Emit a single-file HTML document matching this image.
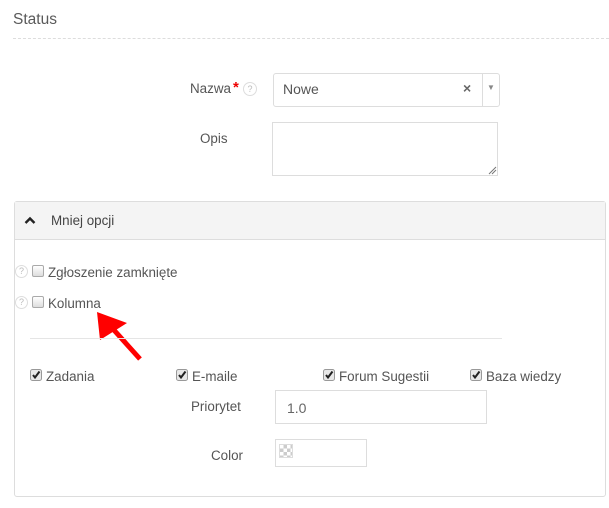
<!DOCTYPE html>
<html><head><meta charset="utf-8"><style>
*{box-sizing:border-box;margin:0;padding:0}
body{width:609px;height:508px;background:#fff;font-family:"Liberation Sans","DejaVu Sans",sans-serif;font-size:13.4px;color:#555;position:relative;overflow:hidden}
.a{position:absolute;white-space:nowrap}
.q{position:absolute;width:14px;height:14px;border:1px solid #ddd;border-radius:50%;font-size:9px;color:#bbb;text-align:center;line-height:12px;background:#fff}
.cb{position:absolute;width:12px;height:12px;border:1px solid #aaa;border-radius:2px;background:linear-gradient(#fff,#ddd)}
.in{position:absolute;border:1px solid #ddd;background:#fff}
</style></head><body>
<div class="a" style="left:13px;top:11px;font-size:15.5px;color:#5a5a5a">Status</div>
<div class="a" style="left:13px;top:38px;width:596px;border-top:1px dashed #ddd"></div>

<div class="a" style="left:190px;top:81px">Nazwa</div>
<div class="a" style="left:233px;top:79px;color:#e00;font-size:15px;font-weight:bold">*</div>
<div class="q" style="left:243px;top:82px">?</div>
<div class="in" style="left:273px;top:73px;width:227px;height:34px;border-radius:3px"></div>
<div class="a" style="left:283px;top:81px;font-size:14px;color:#555">Nowe</div>
<div class="a" style="left:463px;top:80px;font-size:14px;color:#666;font-weight:bold">×</div>
<div class="a" style="left:482px;top:74px;height:32px;border-left:1px solid #ddd"></div>
<div class="a" style="left:487px;top:83px;font-size:8px;color:#888">▼</div>

<div class="a" style="left:200px;top:131px">Opis</div>
<div class="in" style="left:272px;top:122px;width:226px;height:54px"></div>
<svg class="a" style="left:487px;top:165px" width="10" height="10"><path d="M2 9L9 2M5 9L9 5" stroke="#777" stroke-width="1"/></svg>

<div class="a" style="left:14px;top:201px;width:592px;height:296px;border:1px solid #ddd;border-radius:3px"></div>
<div class="a" style="left:15px;top:202px;width:590px;height:38px;background:#f4f4f4;border-bottom:1px solid #ddd"></div>
<svg class="a" style="left:24px;top:216px" width="12" height="9"><path d="M1.5 7L6 2.5L10.5 7" stroke="#222" stroke-width="2.4" fill="none"/></svg>
<div class="a" style="left:51px;top:213px;color:#444">Mniej opcji</div>

<div class="q" style="left:15px;top:265px;width:13px;height:13px;line-height:11px">?</div>
<div class="cb" style="left:32px;top:265px"></div>
<div class="a" style="left:48px;top:265px">Zgłoszenie zamknięte</div>
<div class="q" style="left:15px;top:296px;width:13px;height:13px;line-height:11px">?</div>
<div class="cb" style="left:32px;top:296px"></div>
<div class="a" style="left:48px;top:296px">Kolumna</div>

<svg class="a" style="left:0;top:0" width="609" height="508"><path d="M140 359L113 329" stroke="#f00" stroke-width="5"/><path d="M97 312L127 323L100 340Z" fill="#f00"/></svg>

<div class="a" style="left:30px;top:338px;width:472px;border-top:1px solid #e5e5e5"></div>

<svg width="0" height="0" style="position:absolute"><defs><g id="ck"><rect x="0.5" y="0.5" width="11" height="11" rx="2" fill="#e8e8e8" stroke="#999"/><path d="M3 6L5 8.5L9.5 2.5" stroke="#222" stroke-width="2" fill="none"/></g></defs></svg>
<svg class="a" style="left:30px;top:369px" width="12" height="12"><use href="#ck"/></svg>
<div class="a" style="left:46px;top:369px">Zadania</div>
<svg class="a" style="left:176px;top:369px" width="12" height="12"><use href="#ck"/></svg>
<div class="a" style="left:192px;top:369px">E-maile</div>
<svg class="a" style="left:323px;top:369px" width="12" height="12"><use href="#ck"/></svg>
<div class="a" style="left:339px;top:369px">Forum Sugestii</div>
<svg class="a" style="left:470px;top:369px" width="12" height="12"><use href="#ck"/></svg>
<div class="a" style="left:486px;top:369px">Baza wiedzy</div>

<div class="a" style="left:191px;top:399px">Priorytet</div>
<div class="in" style="left:275px;top:390px;width:212px;height:34px"></div>
<div class="a" style="left:287px;top:400px;font-size:14px;color:#666">1.0</div>

<div class="a" style="left:211px;top:448px">Color</div>
<div class="in" style="left:275px;top:439px;width:92px;height:28px"></div>
<div class="a" style="left:279px;top:444px;width:14px;height:14px;background:conic-gradient(#ccc 25%,#fff 0 50%,#ccc 0 75%,#fff 0);background-size:7px 7px;border:1px solid #ddd"></div>
</body></html>
